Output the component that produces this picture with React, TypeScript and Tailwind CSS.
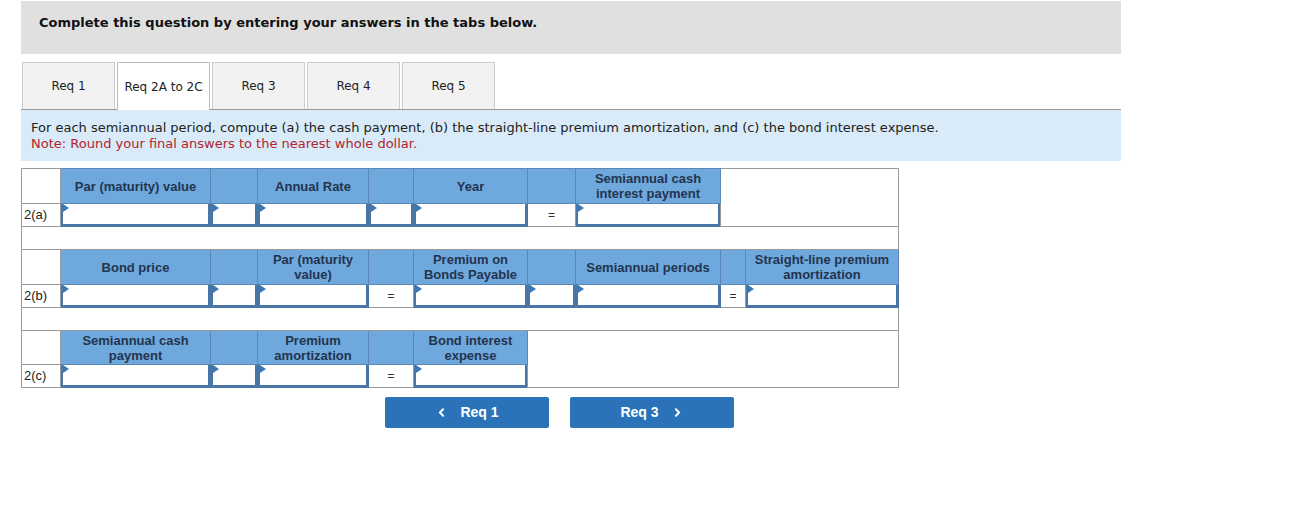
import type { ReactNode } from "react";
import { ChevronLeft, ChevronRight } from "lucide-react";

const cols = [39, 150, 47, 111, 45, 114, 48, 145, 25, 153];

const tabs = ["Req 1", "Req 2A to 2C", "Req 3", "Req 4", "Req 5"];

// Blue heading cell
function H({ children }: { children?: ReactNode }) {
  return (
    <td className="border border-[#5b87b5] bg-[#6fa8dc] px-1 text-center align-middle text-[13px] font-bold leading-[15px] text-[#23344f]">
      {children}
    </td>
  );
}

// Input cell with the little blue flag at its corner
function I() {
  return (
    <td className="h-[23px] border border-[#4a76a5] p-0">
      <div className="relative h-full w-full border-2 border-t-0 border-[#4a76a5] bg-white">
        <span className="absolute left-0 top-0 h-0 w-0 border-y-[4px] border-l-[6px] border-y-transparent border-l-[#3b78b5]" />
      </div>
    </td>
  );
}

function Eq() {
  return (
    <td className="border border-[#999] bg-white text-center text-[12px] text-[#333]">=</td>
  );
}

function Label({ children }: { children?: ReactNode }) {
  return (
    <td className="border border-[#999] bg-white pl-[2px] text-left text-[13px] text-[#222]">
      {children}
    </td>
  );
}

function Spacer() {
  return (
    <tr className="h-[23px]">
      <td colSpan={10} className="border border-[#999] bg-white" />
    </tr>
  );
}

export default function App() {
  return (
    <div className="min-h-[505px] bg-white pt-px font-['DejaVu_Sans',Verdana,sans-serif]">
      <div className="ml-[21px] w-[1100px]">
        <div className="h-[53px] bg-[#e0e0e0] px-[18px] pt-[14px] text-[13px] font-bold leading-[16px] text-[#111]">
          Complete this question by entering your answers in the tabs below.
        </div>

        <div className="mt-[8px] flex gap-[2px] border-b border-[#9a9a9a] pl-px">
          {tabs.map((t, i) => (
            <div
              key={t}
              className={
                i === 1
                  ? "-mb-px flex h-[48px] w-[93px] items-center justify-center border border-b-0 border-[#bbb] bg-white text-[12px] text-[#222]"
                  : "flex h-[47px] w-[93px] items-center justify-center border border-b-0 border-[#ccc] bg-[#f2f2f2] text-[12px] text-[#222]"
              }
            >
              {t}
            </div>
          ))}
        </div>

        <div className="bg-[#d9ebf8] pb-[9px] pl-[10px] pt-[10px] text-[13px] leading-[16px] text-[#222]">
          <p>
            For each semiannual period, compute (a) the cash payment, (b) the straight-line premium
            amortization, and (c) the bond interest expense.
          </p>
          <p className="text-[#b3232e]">Note: Round your final answers to the nearest whole dollar.</p>
        </div>

        <table className="mt-[7px] table-fixed border-collapse border border-[#999] font-['Liberation_Sans',Arial,sans-serif]">
          <colgroup>
            {cols.map((w, i) => (
              <col key={i} style={{ width: w }} />
            ))}
          </colgroup>
          <tbody>
            <tr className="h-[35px]">
              <Label />
              <H>Par (maturity) value</H>
              <H />
              <H>Annual Rate</H>
              <H />
              <H>Year</H>
              <H />
              <H>
                Semiannual cash
                <br />
                interest payment
              </H>
              <td colSpan={2} rowSpan={2} className="border border-[#999] bg-white" />
            </tr>
            <tr className="h-[23px]">
              <Label>2(a)</Label>
              <I />
              <I />
              <I />
              <I />
              <I />
              <Eq />
              <I />
            </tr>
            <Spacer />
            <tr className="h-[35px]">
              <Label />
              <H>Bond price</H>
              <H />
              <H>
                Par (maturity
                <br />
                value)
              </H>
              <H />
              <H>
                Premium on
                <br />
                Bonds Payable
              </H>
              <H />
              <H>Semiannual periods</H>
              <H />
              <H>
                Straight-line premium
                <br />
                amortization
              </H>
            </tr>
            <tr className="h-[23px]">
              <Label>2(b)</Label>
              <I />
              <I />
              <I />
              <Eq />
              <I />
              <I />
              <I />
              <Eq />
              <I />
            </tr>
            <Spacer />
            <tr className="h-[34px]">
              <Label />
              <H>
                Semiannual cash
                <br />
                payment
              </H>
              <H />
              <H>
                Premium
                <br />
                amortization
              </H>
              <H />
              <H>
                Bond interest
                <br />
                expense
              </H>
              <td colSpan={5} rowSpan={2} className="border border-[#999] bg-white" />
            </tr>
            <tr className="h-[22px]">
              <Label>2(c)</Label>
              <I />
              <I />
              <I />
              <Eq />
              <I />
            </tr>
          </tbody>
        </table>

        <div className="ml-[364px] mt-[9px] flex gap-[21px] font-['Liberation_Sans',Arial,sans-serif]">
          <button className="flex h-[31px] w-[164px] items-center justify-center gap-[12px] rounded-[2px] bg-[#2a73b9] text-[14px] font-bold text-white">
            <ChevronLeft size={13} strokeWidth={3.5} />
            Req 1
          </button>
          <button className="flex h-[31px] w-[164px] items-center justify-center gap-[12px] rounded-[2px] bg-[#2a73b9] text-[14px] font-bold text-white">
            Req 3
            <ChevronRight size={13} strokeWidth={3.5} />
          </button>
        </div>
      </div>
    </div>
  );
}
